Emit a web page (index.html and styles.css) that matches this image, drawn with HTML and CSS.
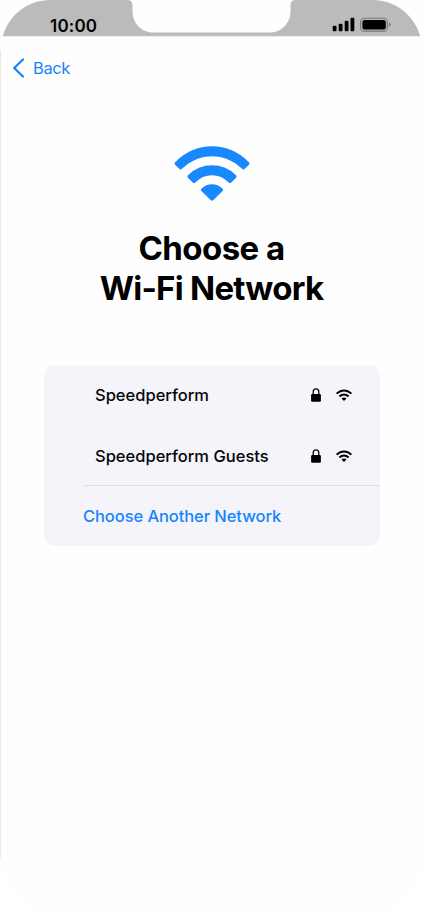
FILE: index.html
```html
<!DOCTYPE html>
<html lang="en">
<head>
<meta charset="utf-8">
<title>Choose a Wi-Fi Network</title>
<link rel="stylesheet" href="styles.css">
</head>
<body>
<svg width="0" height="0" class="defs">
  <symbol id="wifi" viewBox="0 0 76 56">
    <path d="M1.1 17.2Q17 1.3 38 1.3T74.9 17.2Q76.1 18.5 74.9 19.8L70.6 24Q69.4 25 68.1 23.8Q55.5 11.2 38 11.2T7.9 23.8Q6.6 25 5.4 24L1.1 19.8Q-.1 18.5 1.1 17.2Z"/>
    <path d="M14 30.2Q24 20.3 38 20.3T62 30.2Q63.3 31.5 62 32.8L57.3 37.4Q56 38.6 54.7 37.4Q47.5 30.2 38 30.2T21.3 37.4Q20 38.6 18.7 37.4L14 32.8Q12.7 31.5 14 30.2Z"/>
    <path d="M27.6 43.6Q32 39.3 38 39.3T48.4 43.6Q49.8 45 48.4 46.3L39.4 55.1Q38 56.4 36.6 55.1L27.6 46.3Q26.2 45 27.6 43.6Z"/>
  </symbol>
  <symbol id="lock" viewBox="0 0 10 14">
    <path d="M2.2 7V3.9a2.8 3.1 0 0 1 5.6 0V7" fill="none" stroke="currentColor" stroke-width="1.3"/>
    <rect x=".1" y="6" width="9.8" height="7.8" rx="1.2"/>
  </symbol>
</svg>
<div class="phone">
  <header class="status">
    <svg class="frame" width="423" height="37" viewBox="0 0 423 37">
      <path d="M2.8 36.3C9 14 29 0 50 0H127Q132.5 0 132.5 5V11C132.5 24 142 32.6 154 32.6H269C281 32.6 290.5 24 290.5 11V5Q290.5 0 296 0H373C394 0 414 14 420.2 36.3Z"/>
    </svg>
    <span class="time">10:00</span>
    <svg class="signals" width="59" height="16" viewBox="0 0 59 16">
      <rect x="0.7" y="9.8" width="3.8" height="5.4" rx="1"/>
      <rect x="6.7" y="7.7" width="3.8" height="7.5" rx="1"/>
      <rect x="12.7" y="4.8" width="3.8" height="10.4" rx="1"/>
      <rect x="18.5" y="1.8" width="3.8" height="13.4" rx="1"/>
      <rect class="shell" x="28.6" y="2.3" width="26.8" height="12.8" rx="3.8"/>
      <rect x="30.4" y="3.9" width="23.4" height="9.6" rx="2.2"/>
      <path class="cap" d="M56.9 6.7q1.8.5 1.8 2t-1.8 2z"/>
    </svg>
  </header>
  <nav class="back">
    <svg width="13" height="20" viewBox="0 0 13 20"><path d="M11 1.5L2.2 10l8.8 8.5"/></svg>
    <span>Back</span>
  </nav>
  <main>
    <svg class="hero" width="76" height="56"><use href="#wifi"/></svg>
    <h1><span class="line1">Choose a</span><br><span class="line2">Wi-Fi Network</span></h1>
    <section class="list">
      <div class="row first"><span>Speedperform</span><svg width="10" height="14"><use href="#lock"/></svg><svg class="signal" width="16" height="12"><use href="#wifi"/></svg></div>
      <div class="row ruled"><span>Speedperform Guests</span><svg width="10" height="14"><use href="#lock"/></svg><svg class="signal" width="16" height="12"><use href="#wifi"/></svg></div>
      <div class="row other"><span>Choose Another Network</span></div>
    </section>
  </main>
</div>
</body>
</html>
```
FILE: styles.css
```css
* { box-sizing: border-box; }
body { margin: 0; background: #fff; font-family: Inter, "Liberation Sans", sans-serif; color: #050507; }
svg { display: block; flex: none; }
.defs { position: absolute; }
.phone { position: relative; width: 423px; height: 915px; background: #fefefe; border-radius: 0 0 60px 60px; overflow: hidden; }
.phone::before { content: ""; position: absolute; left: 0; top: 50px; width: 1px; height: 808px; background: #e9e9e9; }
.status { position: relative; height: 37px; display: flex; justify-content: space-between; padding: 16px 32px 0 50px; }
.frame { position: absolute; left: 0; top: 0; fill: #bbb; }
.time { position: relative; font-size: 17px; font-weight: 600; line-height: 20px; letter-spacing: 0.2px; color: #000; }
.signals { position: relative; fill: #000; }
.signals .shell { fill: none; stroke: #777; stroke-width: 1.1; }
.signals .cap { fill: #777; }
.back { display: flex; align-items: center; gap: 8px; height: 20px; margin: 21px 0 0 12px; color: #1684fc; font-size: 16.5px; line-height: 20px; letter-spacing: -0.4px; }
.back path { fill: none; stroke: #1684fc; stroke-width: 2.3; stroke-linecap: round; stroke-linejoin: round; }
main { display: flex; flex-direction: column; align-items: center; padding-top: 67px; }
.hero { fill: #1788fe; }
h1 { margin: 27px 0 0; font-size: 33px; line-height: 40px; font-weight: 700; text-align: center; color: #000; white-space: nowrap; }
.line1 { letter-spacing: -0.55px; }
.line2 { letter-spacing: -0.74px; }
.list { width: 336px; height: 181px; margin-top: 57px; background: #f5f4fb; border-radius: 10px; overflow: hidden; font-size: 16.5px; font-weight: 500; }
.row { display: flex; align-items: center; height: 60.5px; margin-left: 39.5px; padding: 0 28px 0 12px; }
.row span { flex: 1; white-space: nowrap; }
.row .signal { margin-left: 15px; }
.first { border-bottom: 1px solid #f2f1f7; }
.ruled { padding-top: 1px; border-bottom: 1px solid #dfdfe5; }
.other { padding-left: 0; color: #1684fc; letter-spacing: -0.08px; }
```
